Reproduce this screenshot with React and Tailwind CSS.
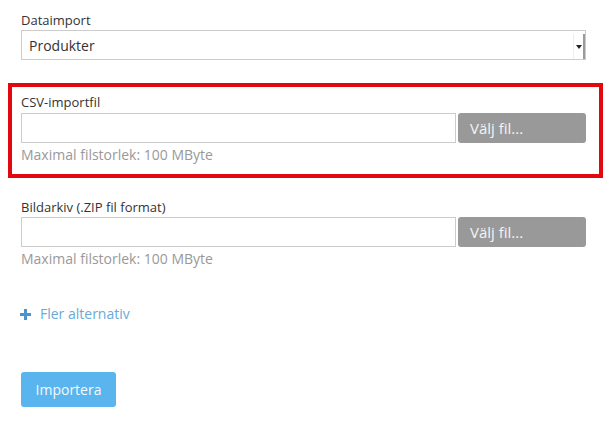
export default function App() {
  const font = { fontFamily: '"Open Sans", "Noto Sans", sans-serif' };
  return (
    <div className="w-[613px] h-[428px] bg-white overflow-hidden" style={font}>
      <div className="pl-[21px] w-[586px] pt-[11px]">
        <div className="text-[13px] leading-[18px] text-[#333] mb-[1px]">Dataimport</div>
        <div className="relative h-[30px] border border-[#ccc] bg-white flex items-center pl-[7px]">
          <span className="text-[14px] text-[#333]">Produkter</span>
          <div className="absolute right-0 top-[3px] bottom-0 w-[12px] flex items-center justify-center border-l border-[#eee]">
            <div className="w-0 h-0 border-l-[3px] border-r-[3px] border-t-[4px] border-l-transparent border-r-transparent border-t-[#222] mr-[2px]" />
            <div className="absolute right-0 top-0 bottom-0 w-[2px] bg-[#9a9a9a]" />
          </div>
        </div>

        <div className="mt-[23px] ml-[-13px] mr-[-17px] border-4 border-[#e3080f] pl-[9px] pr-[13px] pt-[6px] pb-[9px]">
          <div className="text-[13px] leading-[18px] text-[#333] mb-[2px]">CSV-importfil</div>
          <div className="flex h-[30px] gap-[2px]">
            <div className="flex-1 border border-[#ccc] bg-white" />
            <div className="w-[128px] bg-[#999] rounded-[3px] flex items-center pl-[12px] text-[15px] text-[#f4f4f4]">Välj fil...</div>
          </div>
          <div className="mt-[2px] text-[14px] leading-[20px] text-[#999]">Maximal filstorlek: 100 MByte</div>
        </div>

        <div className="mt-[20px]">
          <div className="text-[13px] leading-[18px] text-[#333] mb-[1px]">Bildarkiv (.ZIP fil format)</div>
          <div className="flex h-[30px] gap-[2px]">
            <div className="flex-1 border border-[#ccc] bg-white" />
            <div className="w-[128px] bg-[#999] rounded-[3px] flex items-center pl-[12px] text-[15px] text-[#f4f4f4]">Välj fil...</div>
          </div>
          <div className="mt-[2px] text-[14px] leading-[20px] text-[#999]">Maximal filstorlek: 100 MByte</div>
        </div>

        <div className="mt-[35px] flex items-center h-[20px] ml-[-1px]">
          <svg width="11" height="11" viewBox="0 0 11 11" className="mr-[9px]">
            <rect x="4" y="0" width="3" height="11" fill="#4a93cd" />
            <rect x="0" y="4" width="11" height="3" fill="#4a93cd" />
          </svg>
          <span className="text-[14px] leading-[20px] text-[#6aaad6]">Fler alternativ</span>
        </div>

        <div className="mt-[48px]">
          <button className="w-[95px] h-[35px] bg-[#5ab4ee] rounded-[3px] text-[14px] text-[#f5f9ff]">Importera</button>
        </div>
      </div>
    </div>
  );
}
